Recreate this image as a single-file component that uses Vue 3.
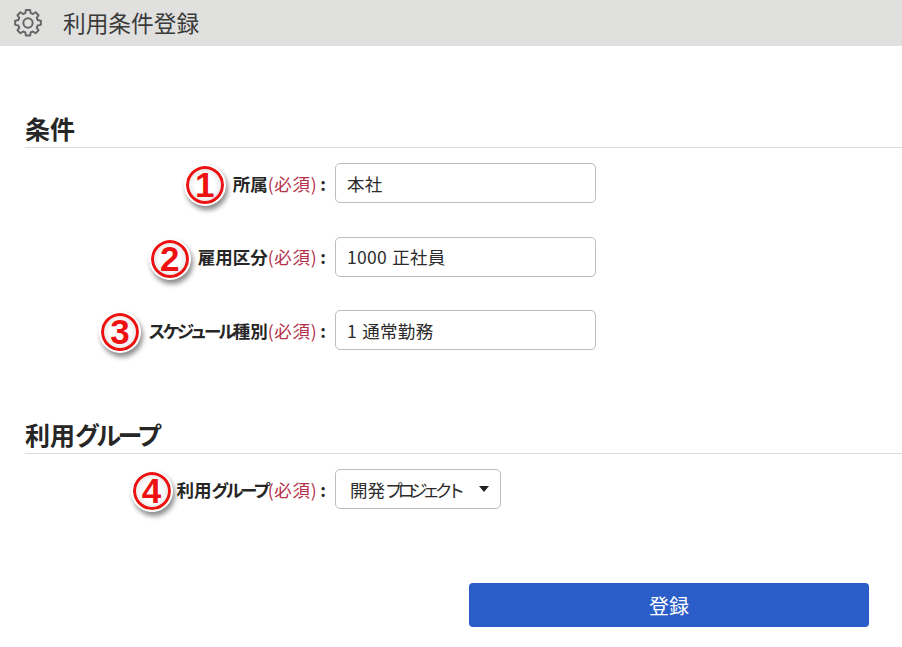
<script setup>
const sections = [
  {
    title: [{ t: '条件' }],
    id: 'a',
    fields: [
      { n: 1, label: [{ t: '所属' }], value: [{ t: '本社' }] },
      { n: 2, label: [{ t: '雇用区分' }], value: [{ t: '1000 正社員' }] },
      { n: 3, label: [{ t: 'スケジュール', tight: true }, { t: '種別' }], value: [{ t: '1 通常勤務' }] },
    ],
  },
  {
    title: [{ t: '利用' }, { t: 'グループ', tight: true }],
    id: 'b',
    fields: [
      {
        n: 4,
        close: true,
        label: [{ t: '利用' }, { t: 'グループ', tight: true }],
        value: [{ t: '開発' }, { t: 'プロジェクト', tight: true }],
        select: true,
      },
    ],
  },
]
</script>

<template>
  <div class="page">
    <header class="bar">
      <svg class="gear" viewBox="0 0 24 24" width="28" height="28" fill="none" stroke="#666" stroke-width="1.7" stroke-linejoin="round">
        <path d="M10.2 2h3.6l.5 2.7 1.9.8 2.3-1.5 2.5 2.5-1.5 2.3.8 1.9 2.7.5v3.6l-2.7.5-.8 1.9 1.5 2.3-2.5 2.5-2.3-1.5-1.9.8-.5 2.7h-3.6l-.5-2.7-1.9-.8-2.3 1.5-2.5-2.5 1.5-2.3-.8-1.9-2.7-.5v-3.6l2.7-.5.8-1.9-1.5-2.3 2.5-2.5 2.3 1.5 1.9-.8z" transform="translate(0 -1.2)" />
        <circle cx="12" cy="12" r="4" />
      </svg>
      <h1 class="bar-title">利用条件登録</h1>
    </header>

    <section v-for="s in sections" :key="s.id" class="section">
      <h2 class="section-title"><span v-for="p in s.title" :key="p.t" :class="{ 'title-tight': p.tight }">{{ p.t }}</span></h2>
      <div class="rows">
        <div v-for="f in s.fields" :key="f.n" class="row">
          <div class="label">
            <span class="badge" :class="{ 'badge-close': f.close }">{{ f.n }}</span>
            <span class="label-text"><span v-for="p in f.label" :key="p.t" :class="{ 'label-tight': p.tight }">{{ p.t }}</span></span><span class="req">(必須)</span><span class="colon">:</span>
          </div>
          <div v-if="f.select" class="select">
            <span><span v-for="p in f.value" :key="p.t" :class="{ 'select-tight': p.tight }">{{ p.t }}</span></span>
            <i class="caret"></i>
          </div>
          <div v-else class="input">{{ f.value[0].t }}</div>
        </div>
      </div>
    </section>

    <div class="actions">
      <button class="submit" type="button">登録</button>
    </div>
  </div>
</template>

<style scoped>
.page {
  width: 902px;
  height: 647px;
  overflow: hidden;
  background: #fff;
  font-family: "Noto Sans CJK JP", "Noto Sans", sans-serif;
  color: #2b2b2b;
}
.bar {
  height: 46px;
  background: #e0e0de;
  display: flex;
  align-items: center;
  padding-left: 14px;
  gap: 21px;
}
.gear { flex: none; }
.bar-title {
  margin: 0;
  font-size: 22.7px;
  font-weight: 400;
  color: #3a3a3a;
  line-height: 1;
}
.section {
  margin-left: 25px;
}
.section:nth-of-type(1) { margin-top: 65px; }
.section:nth-of-type(2) { margin-top: 67px; }
.section-title {
  margin: 0;
  height: 37px;
  line-height: 34px;
  font-size: 25px;
  font-weight: 700;
  color: #262626;
  border-bottom: 1px solid #dcdcdc;
  box-sizing: border-box;
}
.title-tight { letter-spacing: -3.8px; }
.rows {
  display: flex;
  flex-direction: column;
  gap: 33.5px;
  padding-top: 15px;
}
.row {
  display: flex;
  align-items: center;
  height: 40px;
}
.label {
  width: 301px;
  display: flex;
  align-items: center;
  justify-content: flex-end;
  font-size: 17.5px;
  white-space: nowrap;
}
.label-tight { letter-spacing: -3.2px; }
.badge {
  flex: none;
  width: 38px;
  height: 38px;
  margin: 4px 9px 0 0;
  box-sizing: border-box;
  border-radius: 50%;
  border: 3px solid #ee1111;
  outline: 2px solid #fff;
  background: radial-gradient(circle at 50% 50%, #fff 45%, #d4d4d4 100%);
  box-shadow: 2px 4px 5px 2px rgba(0, 0, 0, .45);
  color: #ee1111;
  font-family: "Liberation Sans", sans-serif;
  font-size: 35px;
  font-weight: 700;
  line-height: 32px;
  text-align: center;
}
.badge-close { margin-right: 6px; }
.label-text { font-weight: 700; color: #262626; }
.req { color: #b5324a; letter-spacing: .7px; }
.colon { font-weight: 700; margin-left: 3px; }
.input, .select {
  margin-left: 9px;
  height: 40px;
  box-sizing: border-box;
  border: 1px solid #bdbdbd;
  border-radius: 5px;
  background: #fff;
  font-size: 17.5px;
  color: #2b2b2b;
  display: flex;
  align-items: center;
}
.input {
  width: 261px;
  padding-left: 11px;
  word-spacing: 1px;
  letter-spacing: .3px;
}
.select {
  width: 166px;
  padding: 0 11px 0 14px;
  justify-content: space-between;
}
.select-tight { letter-spacing: -5px; }
.caret {
  width: 0;
  height: 0;
  border-left: 5px solid transparent;
  border-right: 5px solid transparent;
  border-top: 6px solid #222;
}
.actions {
  margin-top: 74px;
  padding-left: 469px;
}
.submit {
  width: 400px;
  height: 44px;
  border: 0;
  border-radius: 4px;
  background: #2b5dc9;
  color: #fff;
  font-family: inherit;
  font-size: 20px;
}
</style>
